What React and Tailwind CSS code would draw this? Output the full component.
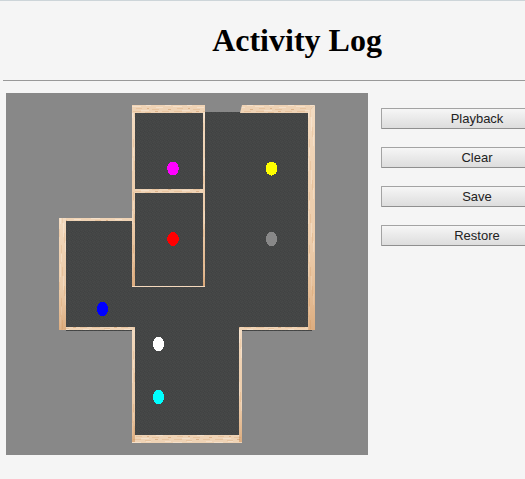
const markers = [
  { name: "magenta", x: 173, y: 168.5, fill: "#ff00ff" },
  { name: "yellow", x: 271.5, y: 168.5, fill: "#ffff00" },
  { name: "red", x: 173, y: 239, fill: "#ff0000" },
  { name: "gray", x: 271.5, y: 239, fill: "#888888" },
  { name: "blue", x: 102.5, y: 309, fill: "#0000ff" },
  { name: "white", x: 158.5, y: 344, fill: "#ffffff" },
  { name: "cyan", x: 158.5, y: 397, fill: "#00ffff" },
];

const actions = ["Playback", "Clear", "Save", "Restore"];

function FloorPlan() {
  return (
    <svg viewBox="6 93 362 362" className="block w-[362px] shrink-0 bg-[#888888]" role="img" aria-label="Floor plan">
      <defs>
        <pattern id="floor" width="4" height="4" patternUnits="userSpaceOnUse">
          <rect width="4" height="4" fill="#444545" />
          <path d="M0 0h1v1h-1zM2 1h1v1h-1zM1 2h1v1h-1zM3 3h1v1h-1z" fill="#474a49" />
          <path d="M3 0h1v1h-1zM0 3h1v1h-1z" fill="#404242" />
        </pattern>
        <pattern id="woodH" width="41" height="8" x="132" y="105" patternUnits="userSpaceOnUse">
          <rect width="41" height="8" fill="#efd3b5" />
          <path d="M0 1h9v1h-9zM24 2h7v1h-7zM9 5h8v1h-8zM33 0h6v1h-6zM14 0h5v1h-5z" fill="#f5e0c9" />
          <path d="M4 3h6v1h-6zM20 4h7v1h-7zM1 6h8v1h-8zM30 6h7v1h-7zM13 7h6v1h-6z" fill="#e8c49f" />
          <path d="M15 3h2v1h-2zM36 4h3v1h-3zM23 6h3v1h-3z" fill="#deb48b" />
        </pattern>
        <pattern id="woodV" width="8" height="53" x="59" y="105" patternUnits="userSpaceOnUse">
          <rect width="8" height="53" fill="#efd3b5" />
          <path d="M1 0h1v13h-1zM4 12h1v14h-1zM6 30h1v11h-1zM2 43h1v8h-1z" fill="#f5e0c9" />
          <path d="M3 3h1v9h-1zM5 22h1v10h-1zM2 34h1v8h-1zM0 18h1v8h-1z" fill="#e8c49f" />
        </pattern>
        <linearGradient id="shade" x1="0" y1="0" x2="0" y2="1">
          <stop offset="0" stopColor="#fff5e8" stopOpacity="0.25" />
          <stop offset="0.6" stopColor="#d69a60" stopOpacity="0.1" />
          <stop offset="1" stopColor="#c47c3c" stopOpacity="0.45" />
        </linearGradient>
      </defs>

      <path d="M132 112H312V331H242V443H132V331H66V219H132z" fill="url(#floor)" />

      <g fill="url(#woodH)">
        <path d="M132 105H205V113H132z" />
        <path d="M242 105H315L308 113H240z" />
        <path d="M135 189H203V193H135z" />
        <path d="M59 218H132V221H59z" />
        <path d="M59 327H135V330H59z" />
        <path d="M239 327H315V330H239z" />
        <path d="M132 435H242V443H132z" />
      </g>
      <path d="M132 286H205V287H132z" fill="#f5d9bd" />
      <g fill="url(#woodV)">
        <path d="M132 113H135V286H132z" />
        <path d="M203 112H205V286H203z" />
        <path d="M315 105V330H308V112z" />
        <path d="M59 218H66V330H59z" />
        <path d="M132 330H135V436H132z" />
        <path d="M239 330H242V436H239z" />
      </g>
      <g fill="url(#shade)">
        <path d="M132 113H135V286H132z" />
        <path d="M203 112H205V286H203z" />
        <path d="M315 105V330H308V112z" />
        <path d="M59 218H66V330H59z" />
        <path d="M132 330H135V442H132z" />
        <path d="M239 330H242V442H239z" />
      </g>

      {markers.map((m) => (
        <ellipse key={m.name} cx={m.x} cy={m.y} rx="5.8" ry="7" fill={m.fill} shapeRendering="crispEdges" />
      ))}
    </svg>
  );
}

export default function App() {
  return (
    <div className="min-h-screen overflow-x-hidden border-t border-[#cdd5d9] bg-[#f5f5f5]">
      <main className="w-full min-w-[594px] px-[3px] pb-6">
        <h1 className="pt-[21px] text-center font-['Liberation_Serif',serif] text-[32px] leading-9 font-bold text-black">
          Activity Log
        </h1>
        <hr className="mt-[22px] border-t border-[#999999]" />
        <div className="mt-3 flex gap-[13px] pl-[3px]">
          <FloorPlan />
          <div className="flex w-48 flex-col gap-[18px] pt-[15px]">
            {actions.map((label) => (
              <button
                key={label}
                type="button"
                className="h-[21px] rounded-[1px] border border-[#a3a3a3] border-b-[#8f8f8f] bg-linear-to-b from-[#f6f6f6] to-[#dddddd] text-center font-['Liberation_Sans',Arial,sans-serif] text-[13px] leading-[19px] text-[#222222]"
              >
                {label}
              </button>
            ))}
          </div>
        </div>
      </main>
    </div>
  );
}
